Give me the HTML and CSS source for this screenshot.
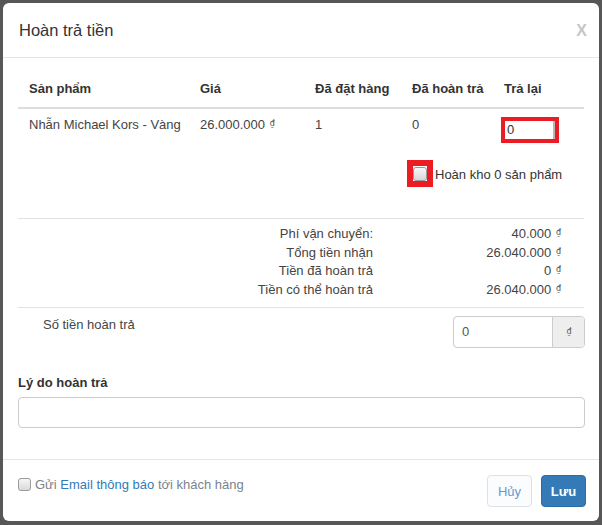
FILE: index.html
```html
<!DOCTYPE html>
<html lang="vi">
<head>
<meta charset="utf-8">
<title>Hoàn trả tiền</title>
<link rel="stylesheet" href="styles.css">
</head>
<body>
<div class="modal">
  <div class="modal-header">
    <h4 class="modal-title">Hoàn trả tiền</h4>
    <span class="close">X</span>
  </div>
  <div class="modal-body">
    <div class="tbl">
      <div class="tr th">
        <div>Sản phẩm</div>
        <div>Giá</div>
        <div>Đã đặt hàng</div>
        <div>Đã hoàn trả</div>
        <div>Trả lại</div>
      </div>
      <div class="tr td">
        <div>Nhẫn Michael Kors - Vàng</div>
        <div>26.000.000 <span class="cur">₫</span></div>
        <div>1</div>
        <div>0</div>
        <div><span class="mark mark-input"><span class="qty">0</span></span></div>
      </div>
      <div class="restock">
        <span class="mark mark-check"><span class="cb cb-big"></span></span>
        <span class="restock-label">Hoàn kho 0 sản phẩm</span>
      </div>
    </div>

    <div class="summary">
      <div class="s-label">Phí vận chuyển:</div><div class="s-val">40.000 <span class="cur">₫</span></div>
      <div class="s-label">Tổng tiền nhận</div><div class="s-val">26.040.000 <span class="cur">₫</span></div>
      <div class="s-label">Tiền đã hoàn trả</div><div class="s-val">0 <span class="cur">₫</span></div>
      <div class="s-label">Tiền có thể hoàn trả</div><div class="s-val">26.040.000 <span class="cur">₫</span></div>
    </div>

    <div class="refund-row">
      <div class="refund-label">Số tiền hoàn trả</div>
      <div class="input-group">
        <div class="ig-input">0</div>
        <div class="ig-addon"><span class="cur">₫</span></div>
      </div>
    </div>

    <div class="reason">
      <div class="reason-label">Lý do hoàn trả</div>
      <div class="text-input"></div>
    </div>
  </div>
  <div class="modal-footer">
    <label class="notify">
      <span class="cb"></span>
      <span>Gửi <span class="link">Email thông báo</span> tới khách hàng</span>
    </label>
    <div class="actions">
      <button class="btn btn-light">Hủy</button>
      <button class="btn btn-primary">Lưu</button>
    </div>
  </div>
</div>
</body>
</html>
```

FILE: styles.css
```css
* { box-sizing: border-box; }

html, body {
  margin: 0;
  padding: 0;
}

body {
  background: #575757;
  font-family: "Liberation Sans", Arial, sans-serif;
  font-size: 13px;
  line-height: 18px;
  color: #333;
  width: 602px;
  height: 525px;
  overflow: hidden;
}

.modal {
  margin: 3px 3px 0 3px;
  width: 596px;
  height: 518px;
  background: #fff;
  border-radius: 6px;
  display: flex;
  flex-direction: column;
}

.modal-header {
  height: 55px;
  border-bottom: 1px solid #e5e5e5;
  display: flex;
  align-items: center;
  justify-content: space-between;
  padding: 0 12px 0 16px;
}

.modal-title {
  margin: 0;
  font-size: 16.5px;
  font-weight: normal;
  line-height: 20px;
  color: #333;
}

.close {
  font-size: 16px;
  font-weight: bold;
  color: #c6c6c6;
  line-height: 16px;
  margin-top: 1px;
}

.modal-body {
  padding: 14px 15px 0 15px;
  flex: 1;
}

.tr {
  display: grid;
  grid-template-columns: 171px 115px 97px 92px 1fr;
  padding-left: 11px;
}

.th {
  height: 37px;
  align-items: center;
  font-weight: bold;
  color: #333;
  border-bottom: 2px solid #ddd;
  padding-bottom: 1px;
}

.td {
  padding-top: 7px;
  align-items: start;
  color: #444;
  height: 34px;
}

.cur {
  font-family: "DejaVu Sans", sans-serif;
  font-size: 8px;
  line-height: 0;
  vertical-align: 3px;
  margin-left: 1px;
}

.mark {
  display: inline-flex;
  border: 4px solid #ec1c24;
  background: #fff;
}

.mark-input {
  margin-left: -3px;
  margin-top: 1px;
  width: 58px;
  height: 26px;
}

.qty {
  display: block;
  width: 50px;
  height: 18px;
  border-right: 2px solid #b8b8b8;
  padding-left: 2px;
  line-height: 18px;
  color: #333;
}

.restock {
  display: flex;
  align-items: center;
  margin-left: 389px;
  margin-top: 17px;
  height: 27px;
}

.mark-check {
  border-width: 6px;
  width: 26px;
  height: 27px;
  align-items: center;
  justify-content: center;
}

.cb {
  display: inline-block;
  width: 13px;
  height: 13px;
  border: 1px solid #9a9a9a;
  border-radius: 3px;
  background: linear-gradient(#f7f7f7, #d9d9d9);
  flex: none;
}

.cb-big {
  width: 14px;
  height: 14px;
}

.restock-label {
  margin-left: 2px;
  margin-top: 3px;
  color: #333;
}

.summary {
  margin-top: 31px;
  border-top: 1px solid #e2e2e2;
  border-bottom: 1px solid #e2e2e2;
  padding: 6px 0 8px 0;
  display: grid;
  grid-template-columns: 355px 188px;
  grid-auto-rows: 18.5px;
  line-height: 18.5px;
  color: #444;
}

.s-label, .s-val {
  text-align: right;
}

.refund-row {
  display: flex;
  align-items: flex-start;
  padding-top: 8px;
}

.refund-label {
  padding-left: 25px;
  color: #444;
}

.input-group {
  margin-left: auto;
  margin-right: -1px;
  display: flex;
  width: 132px;
  height: 32px;
  border: 1px solid #ccc;
  border-radius: 4px;
  overflow: hidden;
}

.ig-input {
  flex: 1;
  padding-left: 8px;
  line-height: 30px;
  color: #555;
}

.ig-addon {
  width: 32px;
  background: #eee;
  border-left: 1px solid #ccc;
  display: flex;
  align-items: center;
  justify-content: center;
  color: #555;
}

.reason {
  margin-top: 26px;
}

.reason-label {
  font-weight: bold;
  color: #333;
}

.text-input {
  margin-top: 5px;
  height: 31px;
  border: 1px solid #ccc;
  border-radius: 4px;
  margin-right: -1px;
}

.modal-footer {
  border-top: 1px solid #e5e5e5;
  height: 62px;
  padding: 15px 13px 0 15px;
  display: flex;
  justify-content: space-between;
  align-items: flex-start;
}

.notify {
  display: flex;
  align-items: center;
  margin-top: 1px;
  color: #7a838c;
}

.notify .cb {
  margin-right: 4px;
  margin-top: -2px;
}

.link {
  color: #337ab7;
}

.actions {
  display: flex;
  gap: 9px;
}

.btn {
  font-family: inherit;
  font-size: 13px;
  height: 32px;
  border-radius: 4px;
  padding: 0;
  cursor: pointer;
}

.btn-light {
  width: 45px;
  background: #fbfcfd;
  border: 1px solid #dde1e5;
  color: #5d9bd3;
}

.btn-primary {
  width: 45px;
  background: #337ab7;
  border: 1px solid #2e6da4;
  color: #fff;
  font-weight: bold;
}
```
